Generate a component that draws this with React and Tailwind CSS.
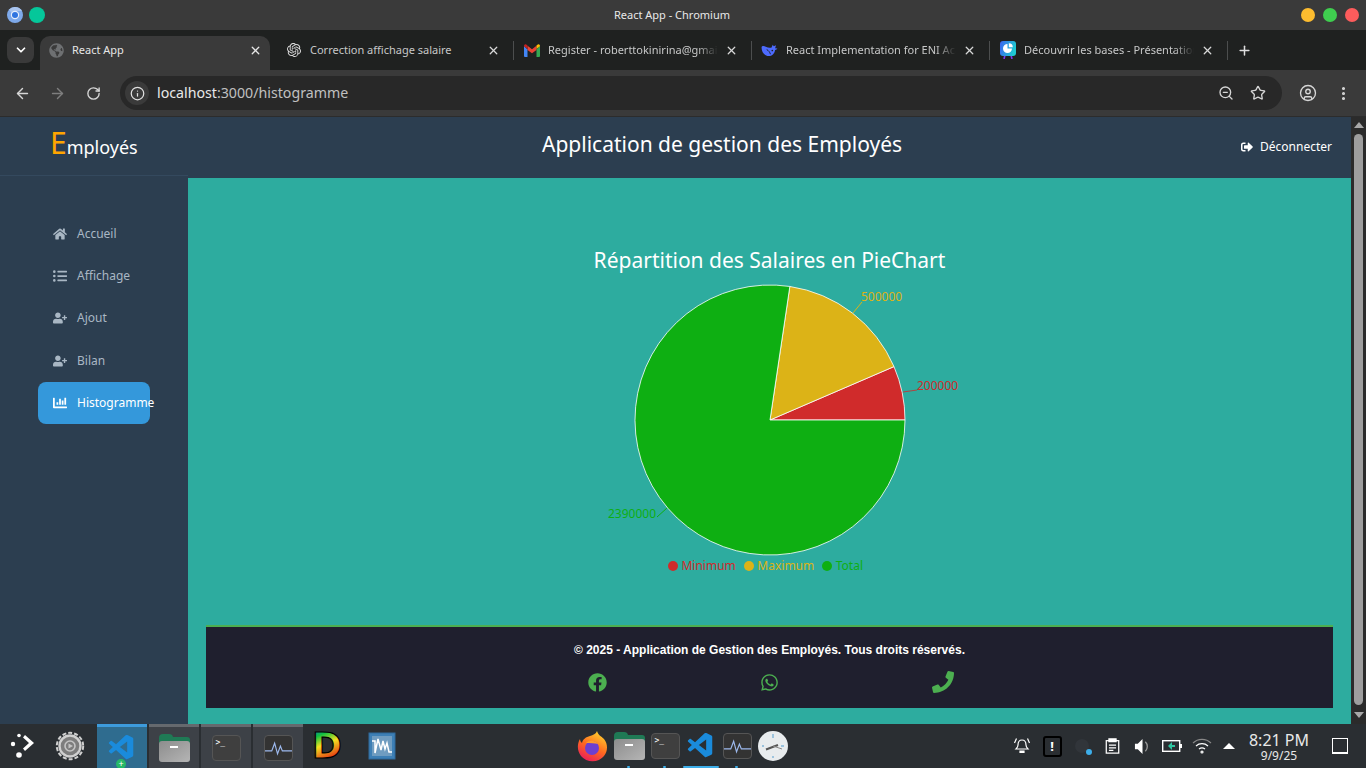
import React from 'react';
import { ArrowLeft, ArrowRight, RotateCw, Info, ZoomOut, Star, CircleUser, EllipsisVertical, ChevronDown, X, Plus } from 'lucide-react';
import { FaHome, FaListUl, FaUserPlus, FaChartBar, FaSignOutAlt, FaFacebook, FaWhatsapp, FaPhone, FaGlobeAmericas } from 'react-icons/fa';
import { SiOpenai } from 'react-icons/si';
import { VscVscode } from 'react-icons/vsc';

const navItems = [
  { label: 'Accueil', icon: FaHome },
  { label: 'Affichage', icon: FaListUl },
  { label: 'Ajout', icon: FaUserPlus },
  { label: 'Bilan', icon: FaUserPlus },
  { label: 'Histogramme', icon: FaChartBar, active: true },
];

const cx = 200;
const cy = 145;
const r = 135;

function polar(deg, radius) {
  const a = (deg * Math.PI) / 180;
  return [cx + radius * Math.cos(a), cy - radius * Math.sin(a)];
}

function slice(from, to) {
  const [x1, y1] = polar(from, r);
  const [x2, y2] = polar(to, r);
  return `M${cx},${cy} L${x1},${y1} A${r},${r} 0 ${to - from > 180 ? 1 : 0} 0 ${x2},${y2} Z`;
}

const slices = [
  { from: 0, to: 23.3, color: '#d02b2b' },
  { from: 23.3, to: 81.55, color: '#dcb317' },
  { from: 81.55, to: 360, color: '#0eaf12' },
];

const legend = [
  { label: 'Minimum', color: '#d02b2b' },
  { label: 'Maximum', color: '#dcb317' },
  { label: 'Total', color: '#0eaf12' },
];

function ChromiumIcon() {
  return (
    <svg viewBox="0 0 16 16" className="h-4 w-4">
      <circle cx="8" cy="8" r="8" fill="#7ea9ea" />
      <path d="M8 0a8 8 0 0 1 7 4H8a4 4 0 0 0-3.500 2L2 2.500A8 8 0 0 1 8 0z" fill="#a9c4ee" />
      <circle cx="8" cy="8" r="4.200" fill="#e6eefb" />
      <circle cx="8" cy="8" r="3" fill="#2f74e0" />
    </svg>
  );
}

function GmailIcon() {
  return (
    <svg viewBox="0 0 16 13" className="h-[13px] w-[16px] shrink-0">
      <path d="M0 2v10a1 1 0 0 0 1 1h2.500V5.500z" fill="#4285f4" />
      <path d="M16 2v10a1 1 0 0 1-1 1h-2.500V5.500z" fill="#34a853" />
      <path d="M3.500 6 8 9.300 12.500 6V1.800L8 5.200 3.500 1.800z" fill="#ea4335" />
      <path d="M0 2.200 3.500 5V1.600L2.200.6C1.200-.1 0 .7 0 2.200z" fill="#c5221f" />
      <path d="M16 2.200 12.500 5V1.600L13.800.6c1-.7 2.200.1 2.200 1.600z" fill="#fbbc04" />
    </svg>
  );
}

function DeepseekIcon() {
  return (
    <svg viewBox="0 0 18 15" className="h-[14px] w-[17px] shrink-0" fill="none">
      <path d="M.5 4.500C1 3 3 3 5 4c2 1 4 1.500 6 1l1.500-3 1 1.500L16 2.500 15 5.500 17.500 6c-.5 1-1.500 1.500-2.500 1.500C14.500 11.500 11.500 14 8 14 3.500 14 .5 9.500.5 4.500z" fill="#4d6bfe" />
      <path d="M6 7c2 1 3.500 3 4 5" stroke="#1f2120" strokeWidth="1" />
      <circle cx="12" cy="8" r="0.900" fill="#1f2120" />
    </svg>
  );
}

function GammaIcon() {
  return (
    <svg viewBox="0 0 16 18" className="h-[18px] w-[16px] shrink-0">
      <defs>
        <linearGradient id="gammaBg" x1="0" y1="0" x2="1" y2="0.3">
          <stop offset="0" stopColor="#3b62f0" />
          <stop offset="1" stopColor="#1ecad3" />
        </linearGradient>
      </defs>
      <path d="M5 14 4 18M11 14l1 4" stroke="#7c3aed" strokeWidth="1.600" />
      <rect width="16" height="15" rx="3" fill="url(#gammaBg)" />
      <path d="M7.500 3a4.500 4.500 0 1 0 4.500 4.500H7.500z" fill="#fff" />
      <path d="M8.800 2.200a4 4 0 0 1 4 4h-4z" fill="#fff" />
    </svg>
  );
}

function Tab({ icon, title, first, fade }) {
  return (
    <div className={`flex h-[34px] shrink-0 items-center pb-[6px] pr-[13px] ${first ? 'w-[243px] pl-[15px]' : 'w-[237px] pl-[9px]'}`}>
      <span className="flex w-[17px] shrink-0 items-center justify-center">{icon}</span>
      <span className={`ml-[8px] overflow-hidden whitespace-nowrap text-[11px] text-[#c7c8c8] ${first ? 'w-[159px]' : 'w-[170px]'}`} style={fade ? { maskImage: 'linear-gradient(to right, #000 88%, transparent)' } : undefined}>
        {title}
      </span>
      <X className="ml-auto h-[13px] w-[13px] text-[#d8d8d8]" strokeWidth={2.4} />
    </div>
  );
}

function TabDivider() {
  return <div className="mb-[6px] h-[19px] w-px shrink-0 bg-[#4c4e4e]" />;
}

function BrowserChrome() {
  return (
    <div className="shrink-0 font-['Noto_Sans',sans-serif]">
      <div className="flex h-[30px] items-center bg-[#3a3a3a] pl-[7px] pr-[7px]">
        <ChromiumIcon />
        <div className="ml-[6px] h-4 w-4 rounded-full bg-[#05c79a]" />
        <div className="flex-1 pr-[2px] text-center text-[11px] text-[#e8e8e8]">React App - Chromium</div>
        <div className="flex gap-[8px]">
          <div className="h-[14px] w-[14px] rounded-full bg-[#fdbc2f]" />
          <div className="h-[14px] w-[14px] rounded-full bg-[#3fce4f]" />
          <div className="h-[14px] w-[14px] rounded-full bg-[#fd5c5c]" />
        </div>
      </div>
      <div className="flex h-[40px] items-end bg-[#1f2120] pl-[7px]">
        <div className="mb-[7px] flex h-[26px] w-[27px] items-center justify-center rounded-[8px] bg-[#3a3a3a]">
          <ChevronDown className="h-[14px] w-[14px] text-white" strokeWidth={3} />
        </div>
        <div className="ml-[6px] flex items-center">
          <div className="flex h-[34px] w-[230px] shrink-0 items-center rounded-t-[10px] bg-[#3a3a3a] pb-[6px] pl-[9px] pr-[8px]">
            <FaGlobeAmericas className="h-[15px] w-[15px] text-[#6e7072]" />
            <span className="ml-[8px] text-[11px] text-[#e6e6e6]">React App</span>
            <X className="ml-auto h-[13px] w-[13px] text-[#e6e6e6]" strokeWidth={2.4} />
          </div>
          <Tab first icon={<SiOpenai className="h-[14px] w-[14px] text-[#e0e0e0]" />} title="Correction affichage salaire" />
          <TabDivider />
          <Tab icon={<GmailIcon />} title="Register - roberttokinirina@gmail.com" fade />
          <TabDivider />
          <Tab icon={<DeepseekIcon />} title="React Implementation for ENI Academy" fade />
          <TabDivider />
          <Tab icon={<GammaIcon />} title="Découvrir les bases - Présentation" fade />
          <TabDivider />
          <Plus className="mb-[6px] ml-[9px] h-[15px] w-[15px] text-[#dedede]" strokeWidth={2.4} />
        </div>
      </div>
      <div className="flex h-[47px] items-center border-b border-[#2c2c2c] bg-[#3a3a3a] pl-[14px]">
        <ArrowLeft className="h-[17px] w-[17px] text-[#d6d6d6]" strokeWidth={2} />
        <ArrowRight className="ml-[18px] h-[17px] w-[17px] text-[#7e7e7e]" strokeWidth={2} />
        <RotateCw className="ml-[20px] h-[15px] w-[15px] text-[#d6d6d6]" strokeWidth={2.2} />
        <div className="ml-[19px] flex h-[34px] w-[1162px] items-center rounded-full bg-[#282828] pl-[5px]">
          <div className="flex h-[24px] w-[24px] items-center justify-center rounded-full bg-[#3a3a3a]">
            <Info className="h-[15px] w-[15px] text-[#e0e0e0]" strokeWidth={2} />
          </div>
          <span className="ml-[8px] text-[14.2px] text-[#c0c0c0]">
            <span className="text-[#e8e8e8]">localhost</span>:3000/histogramme
          </span>
          <ZoomOut className="ml-auto h-[16px] w-[16px] text-[#d6d6d6]" strokeWidth={2} />
          <Star className="ml-[16px] mr-[16px] h-[16px] w-[16px] text-[#d6d6d6]" strokeWidth={2} />
        </div>
        <CircleUser className="ml-[17px] h-[18px] w-[18px] text-[#d6d6d6]" strokeWidth={1.8} />
        <EllipsisVertical className="ml-[18px] h-[17px] w-[17px] text-[#d6d6d6]" strokeWidth={2.4} />
      </div>
    </div>
  );
}

function Sidebar() {
  return (
    <aside className="flex w-[188px] shrink-0 flex-col bg-[#2c3e50]">
      <div className="flex h-[59px] items-baseline border-b border-[#34495e] pl-[50px] pt-[4px] text-white">
        <span className="text-[30px] leading-[44px] text-[#ffa500]">E</span>
        <span className="text-[18px]">mployés</span>
      </div>
      <nav className="flex flex-col pl-[38px] pt-[36.6px]">
        {navItems.map(({ label, icon: Icon, active }) => (
          <div key={label} className={`flex h-[42.3px] w-[112px] items-center rounded-[8px] pl-[15px] ${active ? 'bg-[#3498db] text-white' : 'text-[#a9b7c4]'}`}>
            <Icon className="h-[14px] w-[14px] shrink-0" />
            <span className="ml-[10px] whitespace-nowrap text-[12px]">{label}</span>
          </div>
        ))}
      </nav>
    </aside>
  );
}

function PieChart() {
  return (
    <svg width="400" height="283" className="block">
      {slices.map((s) => (
        <path key={s.color} d={slice(s.from, s.to)} fill={s.color} stroke="#fff" strokeOpacity="0.8" strokeWidth="1" />
      ))}
      <g fontSize="12" fontFamily="Noto Sans, sans-serif">
        <path d="M333 117 L347 115" stroke="#d02b2b" fill="none" opacity="0.8" />
        <text x="347" y="115" fill="#d02b2b">200000</text>
        <path d="M283 38 L292 27" stroke="#dcb317" fill="none" />
        <text x="291" y="26" fill="#dcb317">500000</text>
        <path d="M97 233 L87 242" stroke="#0eaf12" fill="none" />
        <text x="38" y="243" fill="#0eaf12">2390000</text>
      </g>
    </svg>
  );
}

function Footer() {
  return (
    <footer className="mx-[18px] mb-[16px] flex h-[83px] flex-col items-center border-t-2 border-[#4caf50] bg-[#1f1f2e] pt-[15px] font-['Liberation_Sans',sans-serif]">
      <p className="text-[12px] font-bold leading-[16px] text-white">© 2025 - Application de Gestion des Employés. Tous droits réservés.</p>
      <div className="mt-[13px] flex items-center gap-[153px] pl-[2px] text-[#4caf50]">
        <FaFacebook className="h-[19px] w-[19px]" />
        <FaWhatsapp className="h-[19px] w-[19px]" />
        <FaPhone className="h-[22px] w-[22px]" />
      </div>
    </footer>
  );
}

function Scrollbar() {
  return (
    <div className="flex w-[15px] shrink-0 flex-col items-center bg-[#2b2b2b] pt-[5px]">
      <div className="h-0 w-0 border-x-[5px] border-b-[6px] border-x-transparent border-b-[#a8a8a8]" />
      <div className="mt-[6px] h-[571px] w-[9px] rounded-full bg-[#9e9e9e]" />
      <div className="mt-[7px] h-0 w-0 border-x-[5px] border-t-[6px] border-x-transparent border-t-[#a8a8a8]" />
    </div>
  );
}

function FolderIcon() {
  return (
    <div className="relative h-[28px] w-[31px]">
      <div className="absolute left-0 top-0 h-[14px] w-[14px] rounded-t-[4px] bg-[#1f7a55]" />
      <div className="absolute inset-x-0 top-[3px] h-[10px] rounded-t-[3px] bg-[#1f7a55]" />
      <div className="absolute inset-x-0 bottom-0 flex h-[21px] justify-center rounded-[3px] bg-gradient-to-br from-[#8d8d8d] to-[#b5b5b5] pt-[5px]">
        <div className="h-[2px] w-[8px] bg-white" />
      </div>
    </div>
  );
}

function TerminalIcon() {
  return (
    <div className="h-[26px] w-[29px] rounded-[4px] border border-[#555] bg-[#3f3f3f] pl-[3px] font-['DejaVu_Sans_Mono',monospace] text-[8px] leading-[14px] text-white">
      &gt;_
    </div>
  );
}

function MonitorIcon() {
  return (
    <div className="h-[26px] w-[29px] rounded-[4px] border border-[#555] bg-[#333]">
      <svg viewBox="0 0 28 24" className="h-full w-full" fill="none">
        <path d="M0 15h7l3-8 3 11 3-8 2 5h10" stroke="#9db9ee" strokeWidth="1.2" />
      </svg>
    </div>
  );
}

function GearIcon() {
  return (
    <svg viewBox="0 0 30 30" className="h-[30px] w-[30px]" fill="none">
      <circle cx="15" cy="15" r="13.2" stroke="#d0d0d0" strokeWidth="2" strokeDasharray="4 2" />
      <circle cx="15" cy="15" r="10.5" fill="#7d7d7d" stroke="#d0d0d0" strokeWidth="2.4" />
      <circle cx="15" cy="15" r="5" stroke="#c4c4c4" strokeWidth="1.6" />
      <path d="M13.5 12.5 18 15l-4.500 2.500z" fill="#c4c4c4" />
    </svg>
  );
}

function KdeIcon() {
  return (
    <svg viewBox="0 0 26 26" className="h-[26px] w-[26px]" fill="#fff">
      <circle cx="9" cy="2.500" r="1.800" />
      <circle cx="3" cy="11" r="2.200" />
      <circle cx="9" cy="22" r="2.800" />
      <path d="M15 2l9 8-9 8-2-2.500 6-5.500-6-5.500z" />
    </svg>
  );
}

function RainbowD() {
  return (
    <svg width="32" height="32" viewBox="0 0 32 32">
      <defs>
        <linearGradient id="rainbow" x1="0" y1="0" x2="0.3" y2="1">
          <stop offset="0" stopColor="#1e40ff" />
          <stop offset="0.3" stopColor="#10c040" />
          <stop offset="0.55" stopColor="#f5e020" />
          <stop offset="1" stopColor="#e01010" />
        </linearGradient>
      </defs>
      <text x="-1" y="28" fontFamily="DejaVu Sans, sans-serif" fontWeight="bold" fontSize="36" fill="url(#rainbow)" stroke="#000" strokeWidth="1.2">D</text>
    </svg>
  );
}

function WaveIcon() {
  return (
    <svg viewBox="0 0 28 28" className="h-[28px] w-[28px]" fill="none">
      <rect x="1" y="1" width="26" height="26" fill="#3d7fb5" stroke="#2f6a9c" />
      <rect x="4" y="4" width="20" height="20" fill="#6f9cc0" />
      <path d="M4 9h3v12l3-14 3 11 2-9 2 8 2-6 2 9h3" stroke="#fff" strokeWidth="1.500" />
    </svg>
  );
}

function FirefoxIcon() {
  return (
    <svg viewBox="0 0 32 32" className="h-[32px] w-[32px]">
      <defs>
        <linearGradient id="ff" x1="0.7" y1="0" x2="0.2" y2="1">
          <stop offset="0" stopColor="#ffd02e" />
          <stop offset="0.5" stopColor="#ff6a1f" />
          <stop offset="1" stopColor="#e8165f" />
        </linearGradient>
      </defs>
      <path d="M20 1c1 4 4 5 7 8 4 5 4 12 0 17a15 15 0 0 1-23 0C0 21 0 14 3 9c0 2 1 3 2 4 1-4 4-6 8-7 3-1 6-2 7-5z" fill="url(#ff)" />
      <circle cx="15" cy="18" r="7" fill="#6d3fd0" />
      <path d="M9 13c3-3 9-3 12 1-3-1-8-1-12-1z" fill="#ff9a2e" />
    </svg>
  );
}

function ClockIcon() {
  return (
    <svg viewBox="0 0 30 30" className="h-[30px] w-[30px]">
      <circle cx="15" cy="15" r="15" fill="#e8ecee" />
      <path d="M8 18.500 20 14" stroke="#555" strokeWidth="2" />
      <path d="M15 15 24 18" stroke="#888" strokeWidth="1" />
      <path d="M15 3v4M26 15h-3M4 15h2M15 27v-2" stroke="#7fb4d8" strokeWidth="1.400" />
    </svg>
  );
}

function TaskSlot({ children, active, open }) {
  return (
    <div className={`flex h-[44px] w-[50px] shrink-0 items-center justify-center border-t-[3px] ${active ? 'border-[#3d9bdc] bg-[#2f6c8f]' : open ? 'border-[#65696e] bg-[#3d4147]' : 'border-transparent'}`}>
      {children}
    </div>
  );
}

function DockSlot({ children }) {
  return <div className="flex w-[36px] shrink-0 justify-center">{children}</div>;
}

function Tray() {
  return (
    <div className="flex items-center text-white">
      <div className="flex w-[30px] justify-center">
        <svg viewBox="0 0 18 18" className="h-[18px] w-[18px]" fill="none" stroke="#fff" strokeWidth="1.200">
          <path d="M9 3c3 0 4 2 4 5 0 2 1 3 2 4H3c1-1 2-2 2-4 0-3 1-5 4-5z" />
          <path d="M7 14h4v1.500H7z" fill="#fff" />
          <path d="M3.500 1.500 1.500 6M14.500 1.500l2 4.500" />
        </svg>
      </div>
      <div className="flex w-[30px] justify-center">
        <div className="flex h-[21px] w-[19px] items-center justify-center rounded-[3px] border-2 border-black bg-[#2a2e32] text-[13px] font-bold leading-none">!</div>
      </div>
      <div className="relative flex w-[30px] justify-center">
        <div className="h-[14px] w-[14px] rounded-full bg-[#31353a]" />
        <div className="absolute bottom-[-2px] right-[5px] h-[6px] w-[6px] rounded-full bg-[#3daee9]" />
      </div>
      <div className="flex w-[30px] justify-center">
        <svg viewBox="0 0 16 18" className="h-[16px] w-[15px]" fill="none" stroke="#fff" strokeWidth="1.400">
          <rect x="1" y="3" width="14" height="14" />
          <path d="M4 1h8v3H4z" fill="#fff" />
          <path d="M4 8h8M4 11h8M4 14h5" />
        </svg>
      </div>
      <div className="flex w-[30px] justify-center">
        <svg viewBox="0 0 18 18" className="h-[17px] w-[17px]" fill="none">
          <path d="M1 6h3l5-5v16l-5-5H1z" fill="#fff" />
          <path d="M12 4a7 7 0 0 1 0 10" stroke="#999" strokeWidth="1.400" />
        </svg>
      </div>
      <div className="flex w-[30px] justify-center">
        <svg viewBox="0 0 20 12" className="h-[12px] w-[20px]" fill="none">
          <rect x="0.700" y="0.700" width="17" height="10.600" stroke="#fff" strokeWidth="1.400" />
          <rect x="18" y="4" width="2" height="4" fill="#fff" />
          <path d="M10 2 6 6l4 4V7h3V5h-3z" fill="#2fc4a0" />
        </svg>
      </div>
      <div className="flex w-[30px] justify-center">
        <svg viewBox="0 0 20 16" className="h-[16px] w-[20px]" fill="none" stroke="#fff" strokeWidth="1.200">
          <path d="M1 5a13 13 0 0 1 18 0" stroke="#888" />
          <path d="M4 8a9 9 0 0 1 12 0" />
          <path d="M7 11a5 5 0 0 1 6 0" />
          <circle cx="10" cy="14" r="1" />
        </svg>
      </div>
      <div className="ml-[6px] h-0 w-0 border-x-[6px] border-b-[6px] border-x-transparent border-b-white" />
      <div className="ml-[13px] flex w-[62px] flex-col items-center font-['Noto_Sans',sans-serif] text-[#e8e8e8]">
        <span className="whitespace-nowrap text-[16px] leading-[18px]">8:21 PM</span>
        <span className="text-[12px] leading-[13px]">9/9/25</span>
      </div>
      <div className="ml-[22px] h-[16px] w-[16px] border border-b-2 border-white" />
    </div>
  );
}

function Taskbar() {
  const dots = [
    { key: 'a', cls: 'ml-[52px] w-[3px]' },
    { key: 'b', cls: 'ml-[33px] w-[3px]' },
    { key: 'c', cls: 'ml-[17px] w-[36px]' },
    { key: 'd', cls: 'ml-[16px] w-[3px]' },
  ];
  return (
    <div className="flex h-[44px] shrink-0 items-center bg-[#2a2e32] pl-[10px] pr-[18px]">
      <KdeIcon />
      <div className="ml-[19px]"><GearIcon /></div>
      <div className="ml-[12px] flex gap-[2px]">
        <TaskSlot active>
          <div className="relative">
            <VscVscode className="h-[30px] w-[30px] text-[#1a8bdc]" />
            <div className="absolute -bottom-[6px] left-[9px] flex h-[10px] w-[10px] items-center justify-center rounded-full bg-[#25b868] text-[9px] leading-none text-white">+</div>
          </div>
        </TaskSlot>
        <TaskSlot open><FolderIcon /></TaskSlot>
        <TaskSlot open><TerminalIcon /></TaskSlot>
        <TaskSlot open><MonitorIcon /></TaskSlot>
      </div>
      <div className="ml-[10px] w-[44px]"><RainbowD /></div>
      <div className="ml-[11px]"><WaveIcon /></div>
      <div className="relative ml-[179px] flex h-full w-[216px] items-center">
        <DockSlot><FirefoxIcon /></DockSlot>
        <DockSlot><FolderIcon /></DockSlot>
        <DockSlot><TerminalIcon /></DockSlot>
        <DockSlot><VscVscode className="h-[30px] w-[30px] text-[#1a8bdc]" /></DockSlot>
        <DockSlot><MonitorIcon /></DockSlot>
        <DockSlot><ClockIcon /></DockSlot>
        <div className="absolute bottom-0 left-0 flex">
          {dots.map((d) => (
            <div key={d.key} className={`h-[2px] rounded-full bg-[#3daee9] ${d.cls}`} />
          ))}
        </div>
      </div>
      <div className="ml-auto"><Tray /></div>
    </div>
  );
}

export default function App() {
  return (
    <div className="flex h-screen flex-col overflow-hidden bg-[#2c3e50] font-['Noto_Sans',sans-serif]">
      <BrowserChrome />
      <div className="flex min-h-0 flex-1">
        <Sidebar />
        <div className="flex min-w-0 flex-1 flex-col">
          <header className="flex h-[61px] shrink-0 items-center justify-between bg-[#2c3e50] pl-[354px] pr-[19px] text-white">
            <h1 className="pb-[6px] text-[21px]">Application de gestion des Employés</h1>
            <button className="flex items-center gap-[7px] pb-[2px] text-[12px]">
              <FaSignOutAlt className="h-[12px] w-[12px]" /> Déconnecter
            </button>
          </header>
          <main className="flex min-h-0 flex-1 flex-col bg-[#2dac9f]">
            <div className="flex flex-1 flex-col items-center pt-[67px]">
              <h2 className="text-[21px] leading-[30px] text-white">Répartition des Salaires en PieChart</h2>
              <PieChart />
              <div className="mr-[8px] flex items-center gap-[8px] text-[12px] leading-[16px]">
                {legend.map((l) => (
                  <div key={l.label} className="flex items-center gap-[3.5px]" style={{ color: l.color }}>
                    <span className="h-[10px] w-[10px] rounded-full" style={{ background: l.color }} />
                    {l.label}
                  </div>
                ))}
              </div>
            </div>
            <Footer />
          </main>
        </div>
        <Scrollbar />
      </div>
      <Taskbar />
    </div>
  );
}
